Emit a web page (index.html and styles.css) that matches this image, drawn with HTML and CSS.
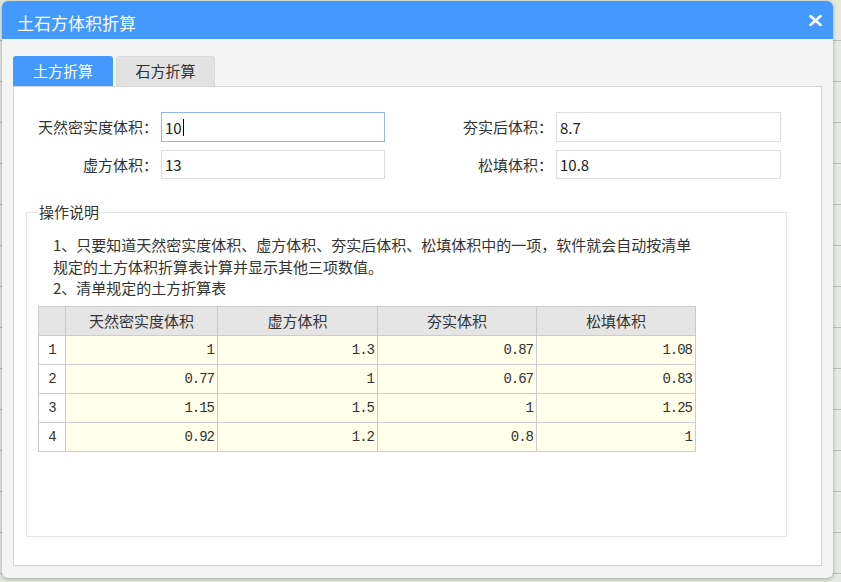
FILE: index.html
```html
<!DOCTYPE html>
<html lang="zh-CN">
<head>
<meta charset="utf-8">
<title>土石方体积折算</title>
<link rel="stylesheet" href="styles.css">
</head>
<body>
<div class="dialog">
  <div class="titlebar">
    <span class="title">土石方体积折算</span>
    <svg class="close" width="13" height="11" viewBox="0 0 13 11"><path d="M1.5 1 L11.5 10 M11.5 1 L1.5 10" stroke="#fff" stroke-width="2.6" stroke-linecap="square"/></svg>
  </div>
  <div class="body">
    <div class="tabs">
      <div class="tab active">土方折算</div>
      <div class="tab">石方折算</div>
    </div>
    <div class="panel">
      <div class="form">
        <label class="lbl">天然密实度体积：</label>
        <div class="field focus"><span>10</span><span class="caret"></span></div>
        <label class="lbl">夯实后体积：</label>
        <div class="field"><span>8.7</span></div>
        <label class="lbl">虚方体积：</label>
        <div class="field"><span>13</span></div>
        <label class="lbl">松填体积：</label>
        <div class="field"><span>10.8</span></div>
      </div>
      <fieldset class="group">
        <legend>操作说明</legend>
        <p class="desc">1、只要知道天然密实度体积、虚方体积、夯实后体积、松填体积中的一项，软件就会自动按清单<br>规定的土方体积折算表计算并显示其他三项数值。<br>2、清单规定的土方折算表</p>
        <table class="grid">
          <colgroup><col class="c0"><col class="c1"><col class="c2"><col class="c3"><col class="c4"></colgroup>
          <thead>
            <tr><th></th><th>天然密实度体积</th><th>虚方体积</th><th>夯实体积</th><th>松填体积</th></tr>
          </thead>
          <tbody>
            <tr><td class="idx">1</td><td>1</td><td>1.3</td><td>0.87</td><td>1.08</td></tr>
            <tr><td class="idx">2</td><td>0.77</td><td>1</td><td>0.67</td><td>0.83</td></tr>
            <tr><td class="idx">3</td><td>1.15</td><td>1.5</td><td>1</td><td>1.25</td></tr>
            <tr><td class="idx">4</td><td>0.92</td><td>1.2</td><td>0.8</td><td>1</td></tr>
          </tbody>
        </table>
      </fieldset>
    </div>
  </div>
</div>
</body>
</html>
```
FILE: styles.css
```css
* { box-sizing: border-box; }
html, body { margin: 0; padding: 0; }
body {
  width: 841px;
  height: 582px;
  overflow: hidden;
  background-color: #e4eadf;
  background-image: repeating-linear-gradient(to bottom, transparent 0, transparent 40px, #b9beb5 40px, #b9beb5 41px);
  font-family: "Noto Sans CJK SC", "Noto Sans", sans-serif;
  color: #333;
}
.dialog {
  margin: 1px 0 0 2px;
  width: 831px;
  height: 577px;
  display: flex;
  flex-direction: column;
  border-radius: 6px;
  box-shadow: 0 1px 4px rgba(0,0,0,0.3);
  background: #f4f4f4;
}
.titlebar {
  height: 38px;
  background: #4499ff;
  border-radius: 6px 6px 0 0;
  display: flex;
  justify-content: space-between;
  align-items: flex-start;
  padding: 10px 11px 0 15px;
}
.title {
  color: #fff;
  font-size: 17px;
  line-height: 24px;
}
.close {
  margin-top: 4px;
}
.body {
  flex: 1;
  display: flex;
  flex-direction: column;
  padding: 17px 11px 12px 11px;
  border-radius: 0 0 6px 6px;
}
.tabs {
  display: flex;
  gap: 3px;
  height: 30px;
}
.tab {
  width: 99px;
  height: 30px;
  background: #e2e2e2;
  border: 1px solid #d9d9d9;
  border-bottom: none;
  border-radius: 3px 3px 0 0;
  font-size: 15px;
  line-height: 28px;
  text-align: center;
  color: #333;
}
.tab.active {
  width: 100px;
  background: #4499ff;
  border-color: #4499ff;
  color: #fff;
}
.panel {
  flex: 1;
  display: flex;
  flex-direction: column;
  background: #fff;
  border: 1px solid #d4d4d4;
  padding: 25px 0 0 0;
}
.form {
  display: grid;
  grid-template-columns: 147px 224px 171px 225px;
  grid-template-rows: 30px 29px;
  row-gap: 8px;
  align-items: center;
}
.lbl {
  text-align: right;
  padding-right: 3px;
  font-size: 15px;
  line-height: 22px;
  color: #333;
}
.field {
  height: 100%;
  border: 1px solid #dddddd;
  display: flex;
  align-items: center;
  padding-left: 3px;
  font-size: 15px;
  color: #222;
}
.field.focus {
  border-color: #8cb8ef;
}
.caret {
  display: inline-block;
  width: 1px;
  height: 17px;
  background: #000;
  margin-left: 1px;
}
.group {
  flex: 1;
  margin: 22px 34px 28px 12px;
  border: 1px solid #e4e4e4;
  padding: 0 10px 0 11px;
  min-width: 0;
}
.group legend {
  padding: 0 1px;
  font-size: 15px;
  line-height: 22px;
  color: #333;
}
.desc {
  margin: 11px 0 0 0;
  padding-left: 15px;
  font-size: 15px;
  line-height: 21.5px;
  color: #333;
}
.grid {
  margin-top: 7px;
  border-collapse: collapse;
  table-layout: fixed;
  width: 657px;
}
.c0 { width: 27px; }
.c1 { width: 152px; }
.c2 { width: 160px; }
.c3 { width: 159px; }
.c4 { width: 159px; }
.grid th, .grid td {
  border: 1px solid #cccccc;
  padding: 0;
}
.grid th {
  height: 29px;
  background: #e5e5e5;
  font-weight: normal;
  font-size: 15px;
  color: #333;
  text-align: center;
}
.grid td {
  height: 29px;
  background: #ffffeb;
  text-align: right;
  padding-right: 3px;
  font-family: "Liberation Mono", monospace;
  font-size: 14px;
  letter-spacing: -1px;
  color: #333;
}
.grid td.idx {
  background: #fff;
  text-align: center;
  padding-right: 0;
}
```
